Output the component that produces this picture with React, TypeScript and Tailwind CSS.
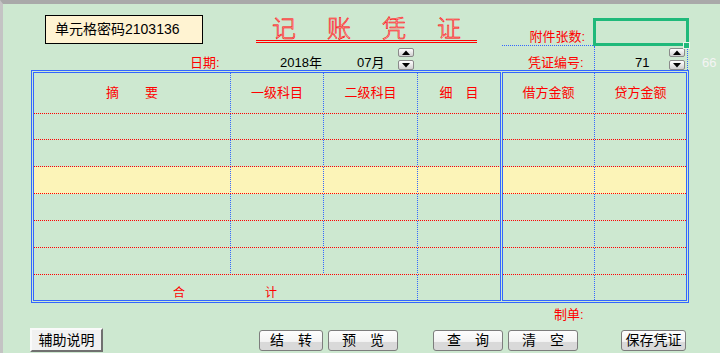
import React from 'react';

const BLUE = 'border-[#3366ff]';
const H_DOTS = 'h-px bg-[repeating-linear-gradient(90deg,#ff0000_0px_1px,transparent_1px_2px)]';
const V_DOTS = 'w-px shrink-0 bg-[repeating-linear-gradient(180deg,#3366ff_0px_1px,transparent_1px_2px)]';

const SpinButton = ({ dir }: { dir: 'up' | 'down' }) => (
  <div className="flex h-full w-full items-center justify-center rounded-[2px] border border-[#8a8a8a] bg-[linear-gradient(#ffffff,#e6e6e6_55%,#cfcfcf)]">
    <svg width="8" height="5" viewBox="0 0 8 5">
      {dir === 'up' ? <path d="M0 5L4 0.5L8 5Z" fill="#000" /> : <path d="M0 0H8L4 4.5Z" fill="#000" />}
    </svg>
  </div>
);

const Spinner = () => (
  <div className="flex h-full w-[16px] flex-col pt-[2px]">
    <div className="h-[9px]">
      <SpinButton dir="up" />
    </div>
    <div className="mt-[3px] h-[10px]">
      <SpinButton dir="down" />
    </div>
  </div>
);

const ToolButton = ({ label, width, className = '' }: { label: string; width: string; className?: string }) => (
  <button
    className={`${width} ${className} h-[21px] rounded-[3px] border border-[#7d7d7d] bg-[linear-gradient(#fdfdfd,#f3f3f3_55%,#d9d9d9_60%,#d9d9d9)] text-[14px] leading-[19px] text-black`}
  >
    {label}
  </button>
);

// column widths of the cell contents, a dotted blue line sits between them
const leftCols = ['w-[196px]', 'w-[92px]', 'w-[93px]', 'w-[82px]'];
const rightCols = ['w-[91px]', 'w-[91px]'];
const bodyRows = ['h-[25px]', 'h-[26px]', 'h-[26px]', 'h-[26px]', 'h-[26px]', 'h-[26px]'];

const Row = ({ cols, height, yellow, labels }: { cols: string[]; height: string; yellow?: boolean; labels?: string[] }) => (
  <div className={`flex flex-col ${yellow ? 'bg-[#fcf4b8]' : ''}`}>
    <div className={`flex ${height}`}>
      {cols.map((w, i) => (
        <React.Fragment key={i}>
          <div className={`${w} flex items-center justify-center text-[#ff0000]`}>{labels ? labels[i] : null}</div>
          {i < cols.length - 1 && <div className={V_DOTS} />}
        </React.Fragment>
      ))}
    </div>
    <div className={H_DOTS} />
  </div>
);

export default function App() {
  return (
    <div className="h-[353px] w-[720px] overflow-hidden border-l-[3px] border-t-[4px] border-l-[#c4c4c4] border-t-[#a9a9a9] bg-[#cde8d0] font-['Liberation_Sans','Noto_Sans_CJK_SC',sans-serif] text-[13px]">
      {/* top row: password, title, attachments */}
      <div className="flex h-[42px] items-start">
        <div className="ml-[42px] mt-[11px] flex h-[29px] w-[158px] items-center border border-black bg-[#fff3d2] pl-[9px] text-[14px] text-black">
          单元格密码2103136
        </div>
        <div className="ml-[53px] mt-[13px] flex h-[26px] w-[221px] gap-[31px] border-b-[3px] border-double border-b-[#ff0000] pl-[16px] text-[24px] font-light leading-[23px] text-[#f7c4c4] [-webkit-text-stroke:0.55px_#ff0000]">
          <span>记</span>
          <span>账</span>
          <span>凭</span>
          <span>证</span>
        </div>
        <div className="ml-[25px] flex h-[42px] w-[91px] items-end justify-end border-b border-dotted border-b-[#3366ff] pb-[1px] pr-[8px] leading-[14px] text-[#ff0000]">
          附件张数:
        </div>
        <div className="relative mt-[14px] h-[28px] w-[96px] border-[3px] border-[#1fb97a]">
          <div className="absolute -bottom-[5px] -right-[3px] h-[5px] w-[5px] bg-[#1fb97a] outline outline-1 outline-[#e8f4ea]" />
        </div>
      </div>

      {/* second row: date and voucher number */}
      <div className="flex h-[24px] items-end leading-[14px]">
        <div className="ml-[187px] w-[90px] text-[#ff0000]">日期:</div>
        <div className="w-[77px] text-black">2018年</div>
        <div className="w-[41px] text-black">07月</div>
        <Spinner />
        <div className="ml-[114px] w-[66px] text-[#ff0000]">凭证编号:</div>
        <div className="flex h-full w-[94px] items-end border-x border-dotted border-x-[#3366ff]">
          <div className="ml-[40px] w-[34px] text-black">71</div>
          <Spinner />
        </div>
        <div className="ml-[14px] text-[#f4f4f4]">66</div>
      </div>

      {/* voucher table */}
      <div className={`ml-[28px] flex h-[233px] w-[658px] gap-[1px] border ${BLUE} p-[1px]`}>
        <div className={`flex w-[468px] flex-col border ${BLUE}`}>
          <Row cols={leftCols} height="h-[40px]" labels={['摘　　要', '一级科目', '二级科目', '细　目']} />
          {bodyRows.map((h, i) => (
            <Row key={i} cols={leftCols} height={h} yellow={i === 2} />
          ))}
          <div className="flex h-[25px] overflow-hidden">
            <div className="flex w-[383px] items-start pl-[139px] pt-[11px] text-[12px] leading-[14px] text-[#ff0000]">
              <span>合</span>
              <span className="ml-[80px]">计</span>
            </div>
            <div className={V_DOTS} />
            <div className="w-[82px]" />
          </div>
        </div>
        <div className={`flex w-[185px] flex-col border ${BLUE}`}>
          <Row cols={rightCols} height="h-[40px]" labels={['借方金额', '贷方金额']} />
          {bodyRows.map((h, i) => (
            <Row key={i} cols={rightCols} height={h} yellow={i === 2} />
          ))}
          <div className="flex h-[25px]">
            <div className="w-[91px]" />
            <div className={V_DOTS} />
            <div className="w-[91px]" />
          </div>
        </div>
      </div>

      {/* maker */}
      <div className="ml-[551px] mt-[5px] h-[14px] leading-[14px] text-[#ff0000]">制单:</div>

      {/* buttons */}
      <div className="mt-[6px] flex items-start">
        <button className="ml-[27px] h-[24px] w-[73px] border-2 border-b-[#707070] border-l-[#fafafa] border-r-[#707070] border-t-[#fafafa] bg-[#f1f1f1] text-[14px] leading-[18px] text-black">
          辅助说明
        </button>
        <ToolButton label="结　转" width="w-[64px]" className="ml-[156px] mt-[2px]" />
        <ToolButton label="预　览" width="w-[70px]" className="ml-[5px] mt-[2px]" />
        <ToolButton label="查　询" width="w-[70px]" className="ml-[35px] mt-[2px]" />
        <ToolButton label="清　空" width="w-[70px]" className="ml-[5px] mt-[2px]" />
        <ToolButton label="保存凭证" width="w-[65px]" className="ml-[43px] mt-[2px]" />
      </div>
    </div>
  );
}
